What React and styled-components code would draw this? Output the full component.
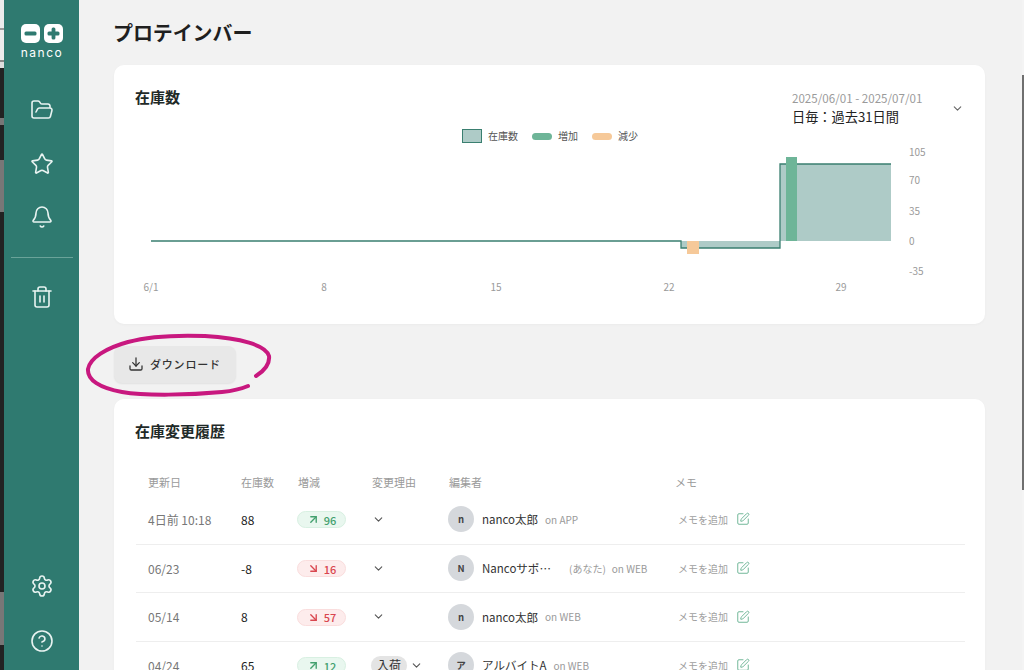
import React from "react";
import styled, { createGlobalStyle } from "styled-components";
import { FolderOpen, Star, Bell, Trash2, Settings, CircleHelp, Download, ChevronDown, SquarePen, ArrowUpRight, ArrowDownRight } from "lucide-react";

const Global = createGlobalStyle`
  html, body { margin: 0; padding: 0; height: 100%; overflow: hidden; background: #f2f2f2; }
  body { font-family: "Noto Sans CJK JP", "Noto Sans", sans-serif; color: #222; }
  * { box-sizing: border-box; }
`;

const Shell = styled.div`
  position: relative;
  display: flex;
  width: 1024px;
  height: 670px;
  overflow: hidden;
`;
const Backdrop = styled.div`
  width: 4px;
  flex: none;
  display: flex;
  flex-direction: column;
`;
const BackdropBand = styled.div`
  height: ${p => p.$h}px;
  flex: none;
  background: ${p => p.$c};
`;
const Sidebar = styled.nav`
  width: 75px;
  flex: none;
  background: #2f7a70;
  display: flex;
  flex-direction: column;
  align-items: center;
  padding: 24px 0 17px;
  color: #e8f3f1;
`;
const LogoMarks = styled.div`
  display: flex;
  gap: 4px;
`;
const LogoWord = styled.div`
  font-family: "Inter", sans-serif;
  font-size: 12px;
  line-height: 14px;
  margin-top: 3px;
  letter-spacing: 1.5px;
  padding-left: 1px;
  color: #fff;
`;
const NavIcon = styled.div`
  height: 24px;
  width: 24px;
  margin-top: ${p => p.$top || 0}px;
  display: flex;
  align-items: center;
  justify-content: center;
`;
const NavRule = styled.div`
  width: 62px;
  height: 1px;
  background: #6aa399;
  margin-top: 28px;
`;
const Spacer = styled.div`
  flex: 1;
`;
const Main = styled.main`
  flex: 1;
  min-width: 0;
  padding: 0 37px 0 35px;
  overflow: hidden;
`;
const Title = styled.h1`
  margin: 0;
  padding-top: 18px;
  height: 65px;
  margin-left: -1px;
  font-size: 20px;
  line-height: 30px;
  font-weight: 700;
  letter-spacing: -0.1px;
  color: #1f1f1f;
`;
const Card = styled.section`
  background: #fff;
  border-radius: 10px;
  box-shadow: 0 1px 3px rgba(0, 0, 0, 0.03);
  padding: 21px 20px 0 21px;
`;
const ChartCard = styled(Card)`
  height: 259px;
  position: relative;
`;
const CardHead = styled.div`
  display: flex;
  justify-content: space-between;
  align-items: flex-start;
`;
const CardTitle = styled.h2`
  margin: 0;
  font-size: 15px;
  line-height: 21px;
  font-weight: 700;
  color: #1f2a28;
`;
const RangeBox = styled.div`
  display: flex;
  align-items: center;
  gap: 28px;
  padding: 3px 1px 0 0;
`;
const RangeText = styled.div`
  width: 131px;
`;
const RangeDates = styled.div`
  font-size: 11.6px;
  line-height: 18px;
  color: #9a9a9a;
  white-space: nowrap;
`;
const RangeLabel = styled.div`
  font-size: 13.2px;
  line-height: 20px;
  color: #222;
  white-space: nowrap;
`;
const Legend = styled.div`
  position: absolute;
  top: 64px;
  left: 348px;
  display: flex;
  align-items: center;
  font-size: 10px;
  line-height: 14px;
  color: #555;
`;
const LegendBox = styled.span`
  width: 20px;
  height: 14px;
  background: #aecbc7;
  border: 1px solid #3a7f70;
  margin-right: 6px;
`;
const LegendPill = styled.span`
  width: 20px;
  height: 7px;
  border-radius: 4px;
  background: ${p => p.$c};
  margin: 0 6px 0 14px;
`;
const ChartSvg = styled.svg`
  position: absolute;
  left: 0;
  top: 60px;
  width: 871px;
  height: 199px;
`;
const DownloadRow = styled.div`
  height: 75px;
  padding-top: 23px;
`;
const DownloadButton = styled.button`
  width: 122px;
  height: 37px;
  margin-top: -1px;
  border: 0;
  border-radius: 8px;
  background: #e8e8e8;
  box-shadow: 0 1px 2px rgba(0, 0, 0, 0.07);
  display: flex;
  align-items: center;
  gap: 6px;
  padding: 0 0 2px 14px;
  font-family: inherit;
  font-size: 11px;
  font-weight: 500;
  letter-spacing: 0.8px;
  color: #333;
`;
const TableCard = styled(Card)`
  height: 320px;
`;
const Table = styled.div`
  margin-top: 31px;
  margin-left: 1px;
  width: 829px;
`;
const Row = styled.div`
  display: grid;
  grid-template-columns: 93px 57px 74px 77px 226px 1fr;
  align-items: center;
  padding: 0 0 ${p => (p.$head ? 0 : 1)}px 12px;
  height: ${p => (p.$head ? "24px" : "48.7px")};
  border-bottom: ${p => (p.$head ? "none" : "1px solid #eeeeee")};
`;
const HeadCell = styled.div`
  font-size: 11px;
  color: #9a9a9a;
  transform: translateY(-2px);
`;
const DateCell = styled.div`
  font-size: 12px;
  color: #777;
  white-space: nowrap;
`;
const StockCell = styled.div`
  font-size: 12px;
  color: #222;
`;
const Badge = styled.span`
  display: inline-flex;
  align-items: center;
  justify-content: center;
  gap: 4px;
  width: 49px;
  height: 17px;
  margin-left: -1px;
  border-radius: 9px;
  font-size: 11px;
  font-weight: 500;
  background: ${p => (p.$up ? "#e9f7ef" : "#fdecec")};
  border: 1px solid ${p => (p.$up ? "#d8f0e2" : "#fadddd")};
  color: ${p => (p.$up ? "#43a06e" : "#d9464f")};
`;
const ReasonCell = styled.div`
  display: flex;
  align-items: center;
  gap: 3px;
  color: #555;
`;
const ReasonChip = styled.span`
  font-size: 12px;
  line-height: 18px;
  height: 19px;
  padding: 0 6px;
  margin-left: -1px;
  border-radius: 10px;
  background: #e4e4e4;
  color: #333;
`;
const Editor = styled.div`
  display: flex;
  align-items: center;
  margin-left: -1px;
  white-space: nowrap;
`;
const Avatar = styled.span`
  width: 26px;
  height: 26px;
  flex: none;
  margin-right: 8px;
  border-radius: 50%;
  background: #d5d8dc;
  color: #444;
  font-size: 9.5px;
  font-weight: 700;
  display: flex;
  align-items: center;
  justify-content: center;
`;
const EditorName = styled.span`
  font-size: 11.5px;
  color: #333;
  margin-right: 7px;
`;
const TruncName = styled(EditorName)`
  width: 70px;
  margin-right: 17px;
  overflow: hidden;
  text-overflow: ellipsis;
`;
const Meta = styled.span`
  font-size: 10px;
  color: #9a9a9a;
  margin-right: 6px;
`;
const MemoCell = styled.div`
  display: flex;
  align-items: center;
  gap: 8px;
  padding-left: 3px;
  font-size: 10px;
  color: #a0a0a0;
  white-space: nowrap;
  & > svg { color: #5fae8c; }
`;
const ScrollTrack = styled.div`
  width: 2px;
  flex: none;
  padding-top: 75px;
  background: #f4f4f4;
`;
const ScrollThumb = styled.div`
  height: 415px;
  background: #6f6f6f;
`;
const Scribble = styled.svg`
  position: absolute;
  left: 80px;
  top: 328px;
  width: 200px;
  height: 75px;
  pointer-events: none;
`;

const Logo = () => (
  <LogoMarks>
    <svg width="19" height="19" viewBox="0 0 19 19">
      <rect width="19" height="19" rx="5" fill="#fff" />
      <rect x="3.5" y="7.6" width="12" height="3.8" rx="1.5" fill="#2f7a70" />
    </svg>
    <svg width="19" height="19" viewBox="0 0 19 19">
      <rect width="19" height="19" rx="5" fill="#fff" />
      <rect x="3.5" y="7.6" width="12" height="3.8" rx="1.5" fill="#2f7a70" />
      <rect x="7.6" y="3.5" width="3.8" height="12" rx="1.5" fill="#2f7a70" />
    </svg>
  </LogoMarks>
);

const rows = [
  { date: "4日前 10:18", stock: "88", up: true, delta: 96, avatar: "n", name: "nanco太郎", via: "on APP" },
  { date: "06/23", stock: "-8", up: false, delta: 16, avatar: "N", name: "Nancoサポート", you: true, via: "on WEB" },
  { date: "05/14", stock: "8", up: false, delta: 57, avatar: "n", name: "nanco太郎", via: "on WEB" },
  { date: "04/24", stock: "65", up: true, delta: 12, reason: "入荷", avatar: "ア", name: "アルバイトA", via: "on WEB" },
];

const Chart = () => (
  <ChartSvg viewBox="114 125 871 199">
    <path d="M681 241H780V248H681Z" fill="#aecbc7" />
    <rect x="780" y="164" width="111" height="77" fill="#aecbc7" />
    <path d="M151 241H681V248H780V164H891" fill="none" stroke="#3a7f70" strokeWidth="1.3" />
    <rect x="786" y="157" width="11" height="84" fill="#6eb598" />
    <rect x="687" y="241" width="12" height="13" fill="#f6c999" />
    <g fontSize="10" fill="#9a9a9a" fontFamily="'Noto Sans CJK JP', sans-serif">
      <text x="151" y="291" textAnchor="middle">6/1</text>
      <text x="324" y="291" textAnchor="middle">8</text>
      <text x="496" y="291" textAnchor="middle">15</text>
      <text x="669" y="291" textAnchor="middle">22</text>
      <text x="841" y="291" textAnchor="middle">29</text>
      <text x="909" y="156">105</text>
      <text x="909" y="184">70</text>
      <text x="909" y="215">35</text>
      <text x="909" y="245">0</text>
      <text x="909" y="275">-35</text>
    </g>
  </ChartSvg>
);

const bands = [
  [28, "#ececec"], [2, "#999"], [30, "#ececec"], [2, "#888"], [6, "#ddd"], [50, "#222"], [7, "#777"], [35, "#222"],
  [52, "#777"], [380, "#222"], [53, "#777"], [25, "#222"],
];

export default function App() {
  return (
    <Shell>
      <Global />
      <Backdrop>
        {bands.map(([h, c], i) => <BackdropBand key={i} $h={h} $c={c} />)}
      </Backdrop>
      <Sidebar>
        <Logo />
        <LogoWord>nanco</LogoWord>
        <NavIcon $top={38}><FolderOpen size={24} strokeWidth={1.6} /></NavIcon>
        <NavIcon $top={30}><Star size={24} strokeWidth={1.6} /></NavIcon>
        <NavIcon $top={29}><Bell size={24} strokeWidth={1.6} /></NavIcon>
        <NavRule />
        <NavIcon $top={27}><Trash2 size={24} strokeWidth={1.6} /></NavIcon>
        <Spacer />
        <NavIcon><Settings size={24} strokeWidth={1.6} /></NavIcon>
        <NavIcon $top={31}><CircleHelp size={24} strokeWidth={1.6} /></NavIcon>
      </Sidebar>
      <Main>
        <Title>プロテインバー</Title>
        <ChartCard>
          <CardHead>
            <CardTitle>在庫数</CardTitle>
            <RangeBox>
              <RangeText>
                <RangeDates>2025/06/01 - 2025/07/01</RangeDates>
                <RangeLabel>日毎：過去31日間</RangeLabel>
              </RangeText>
              <ChevronDown size={13} color="#666" />
            </RangeBox>
          </CardHead>
          <Legend>
            <LegendBox />在庫数
            <LegendPill $c="#6eb598" />増加
            <LegendPill $c="#f6c999" />減少
          </Legend>
          <Chart />
        </ChartCard>
        <DownloadRow>
          <DownloadButton>
            <Download size={16} strokeWidth={1.9} />
            ダウンロード
          </DownloadButton>
        </DownloadRow>
        <TableCard>
          <CardTitle>在庫変更履歴</CardTitle>
          <Table>
            <Row $head>
              <HeadCell>更新日</HeadCell>
              <HeadCell>在庫数</HeadCell>
              <HeadCell>増減</HeadCell>
              <HeadCell>変更理由</HeadCell>
              <HeadCell>編集者</HeadCell>
              <HeadCell>メモ</HeadCell>
            </Row>
            {rows.map((r, i) => (
              <Row key={i}>
                <DateCell>{r.date}</DateCell>
                <StockCell>{r.stock}</StockCell>
                <div>
                  <Badge $up={r.up}>
                    {r.up ? <ArrowUpRight size={13} strokeWidth={2.5} /> : <ArrowDownRight size={13} strokeWidth={2.5} />}
                    {r.delta}
                  </Badge>
                </div>
                <ReasonCell>
                  {r.reason && <ReasonChip>{r.reason}</ReasonChip>}
                  <ChevronDown size={13} />
                </ReasonCell>
                <Editor>
                  <Avatar>{r.avatar}</Avatar>
                  {r.you ? <TruncName>{r.name}</TruncName> : <EditorName>{r.name}</EditorName>}
                  {r.you && <Meta>(あなた)</Meta>}
                  <Meta>{r.via}</Meta>
                </Editor>
                <MemoCell>
                  メモを追加
                  <SquarePen size={14} strokeWidth={1.5} />
                </MemoCell>
              </Row>
            ))}
          </Table>
        </TableCard>
      </Main>
      <ScrollTrack><ScrollThumb /></ScrollTrack>
      <Scribble viewBox="80 328 200 75">
        <path
          d="M256 376C264 371 270 364 269 356C266 345 240 338 205 336C178 335 150 336 128 342C106 348 90 358 88 369C87 380 100 388 122 392C145 396 190 395 222 392C232 391 241 389 248 386"
          fill="none"
          stroke="#c8187f"
          strokeWidth="4"
          strokeLinecap="round"
        />
      </Scribble>
    </Shell>
  );
}
